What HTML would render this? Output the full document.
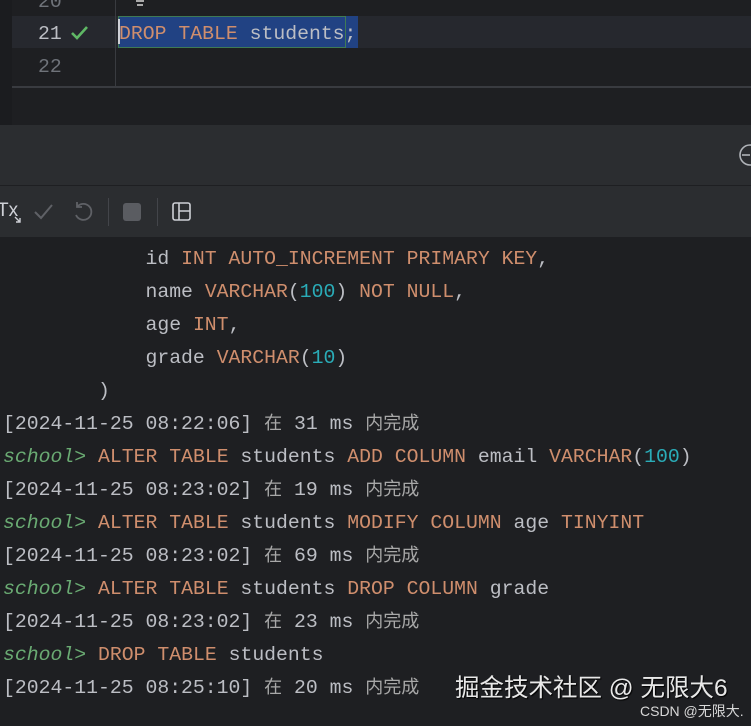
<!DOCTYPE html>
<html><head><meta charset="utf-8"><style>
*{margin:0;padding:0;box-sizing:border-box}
body{width:751px;height:726px;background:#1e1f22;overflow:hidden;position:relative;font-family:"Liberation Mono","Noto Sans CJK SC",monospace;font-size:19.8px;color:#bcbec4}
.abs{position:absolute}
.ln{position:absolute;height:33px;line-height:33px;white-space:pre}
.k{color:#cf8e6d}.n{color:#2aacb8}.s{color:#6aab73;font-style:italic}.c{color:#a8a8a8;font-family:"Noto Sans CJK SC",sans-serif;font-size:18px;line-height:10px}
</style></head><body>
<div class="abs" style="left:0;top:0;width:12px;height:125px;background:#1b1c1f"></div>
<div class="abs" style="left:12px;top:16px;width:739px;height:32px;background:#26282e"></div>
<div class="abs" style="left:115px;top:0;width:1px;height:86px;background:#393b40"></div>
<div class="abs" style="left:12px;top:86px;width:739px;height:2px;background:#393b40"></div>
<div class="ln" style="left:38px;top:-14px;color:#6f737a">20</div>
<div class="abs" style="left:136px;top:0;width:8px;height:2px;background:#aaa"></div>
<div class="abs" style="left:137px;top:4px;width:6px;height:2px;background:#aaa"></div>
<div class="ln" style="left:38px;top:18px;color:#bcbec4">21</div>
<svg class="abs" style="left:70px;top:25px" width="20" height="16"><path d="M2 8l5 5 10-11" stroke="#5fb865" stroke-width="2.6" fill="none"/></svg>
<div class="ln" style="left:38px;top:51px;color:#6f737a">22</div>
<div class="abs" style="left:118px;top:16px;width:240px;height:32px;background:#214283"></div>
<div class="abs" style="left:118px;top:16px;width:228px;height:32px;border:1px solid #3f7a55"></div>
<div class="abs" style="left:118px;top:19px;width:2px;height:25px;background:#ced0d6"></div>
<div class="ln" style="left:119px;top:18px"><span class="k">DROP TABLE</span> students;</div>
<div class="abs" style="left:0;top:125px;width:751px;height:60px;background:#2b2d30"></div>
<div class="abs" style="left:0;top:185px;width:751px;height:1px;background:#1e1f22"></div>
<div class="abs" style="left:0;top:186px;width:751px;height:51px;background:#2b2d30"></div>
<div class="abs" style="left:0;top:237px;width:751px;height:1px;background:#1e1f22"></div>
<svg class="abs" style="left:738px;top:143px" width="13" height="24"><circle cx="12" cy="12" r="10" stroke="#b0b3b8" stroke-width="1.6" fill="none"/><path d="M4 12h8" stroke="#b0b3b8" stroke-width="1.6"/></svg>
<div class="abs" style="left:-3px;top:200px;font-family:'Liberation Sans',sans-serif;font-size:19px;color:#ced0d6">Tx</div>
<svg class="abs" style="left:14px;top:216px" width="8" height="8"><path d="M1 1l5 5M6 2v4H2" stroke="#ced0d6" stroke-width="1.4" fill="none"/></svg>
<svg class="abs" style="left:33px;top:202px" width="22" height="20"><path d="M2 10l6 6 11-13" stroke="#5f6166" stroke-width="2" fill="none"/></svg>
<svg class="abs" style="left:72px;top:201px" width="22" height="22"><path d="M5 6A8 8 0 1 1 4 14M5 1v5h5" stroke="#5f6166" stroke-width="1.8" fill="none"/></svg>
<div class="abs" style="left:108px;top:198px;width:1px;height:28px;background:#43454a"></div>
<div class="abs" style="left:123px;top:203px;width:18px;height:18px;background:#5a5c61;border-radius:3px"></div>
<div class="abs" style="left:157px;top:198px;width:1px;height:28px;background:#43454a"></div>
<svg class="abs" style="left:172px;top:202px" width="20" height="20"><rect x="1" y="1" width="17" height="17" rx="2" stroke="#ced0d6" stroke-width="1.6" fill="none"/><path d="M7 1v17M7 9h11" stroke="#ced0d6" stroke-width="1.6"/></svg>
<div class="ln" style="left:3px;top:243px">            id <span class="k">INT AUTO_INCREMENT PRIMARY KEY</span>,</div>
<div class="ln" style="left:3px;top:276px">            name <span class="k">VARCHAR</span>(<span class="n">100</span>) <span class="k">NOT NULL</span>,</div>
<div class="ln" style="left:3px;top:309px">            age <span class="k">INT</span>,</div>
<div class="ln" style="left:3px;top:342px">            grade <span class="k">VARCHAR</span>(<span class="n">10</span>)</div>
<div class="ln" style="left:3px;top:375px">        )</div>
<div class="ln" style="left:3px;top:408px">[2024-11-25 08:22:06] <span class="c">在</span> 31 ms <span class="c">内完成</span></div>
<div class="ln" style="left:3px;top:441px"><span class="s">school&gt;</span> <span class="k">ALTER TABLE</span> students <span class="k">ADD COLUMN</span> email <span class="k">VARCHAR</span>(<span class="n">100</span>)</div>
<div class="ln" style="left:3px;top:474px">[2024-11-25 08:23:02] <span class="c">在</span> 19 ms <span class="c">内完成</span></div>
<div class="ln" style="left:3px;top:507px"><span class="s">school&gt;</span> <span class="k">ALTER TABLE</span> students <span class="k">MODIFY COLUMN</span> age <span class="k">TINYINT</span></div>
<div class="ln" style="left:3px;top:540px">[2024-11-25 08:23:02] <span class="c">在</span> 69 ms <span class="c">内完成</span></div>
<div class="ln" style="left:3px;top:573px"><span class="s">school&gt;</span> <span class="k">ALTER TABLE</span> students <span class="k">DROP COLUMN</span> grade</div>
<div class="ln" style="left:3px;top:606px">[2024-11-25 08:23:02] <span class="c">在</span> 23 ms <span class="c">内完成</span></div>
<div class="ln" style="left:3px;top:639px"><span class="s">school&gt;</span> <span class="k">DROP TABLE</span> students</div>
<div class="ln" style="left:3px;top:672px">[2024-11-25 08:25:10] <span class="c">在</span> 20 ms <span class="c">内完成</span></div>
<div class="abs" style="left:455px;top:674px;font-family:'Liberation Sans','Noto Sans CJK SC',sans-serif;font-size:24.5px;line-height:30px;color:#e8e8e8;white-space:nowrap;text-shadow:1px 1px 1px #000">掘金技术社区 @ 无限大6</div>
<div class="abs" style="left:640px;top:702px;font-family:'Liberation Sans','Noto Sans CJK SC',sans-serif;font-size:14px;line-height:18px;color:#d8d8d8;white-space:nowrap">CSDN @无限大.</div>
</body></html>
